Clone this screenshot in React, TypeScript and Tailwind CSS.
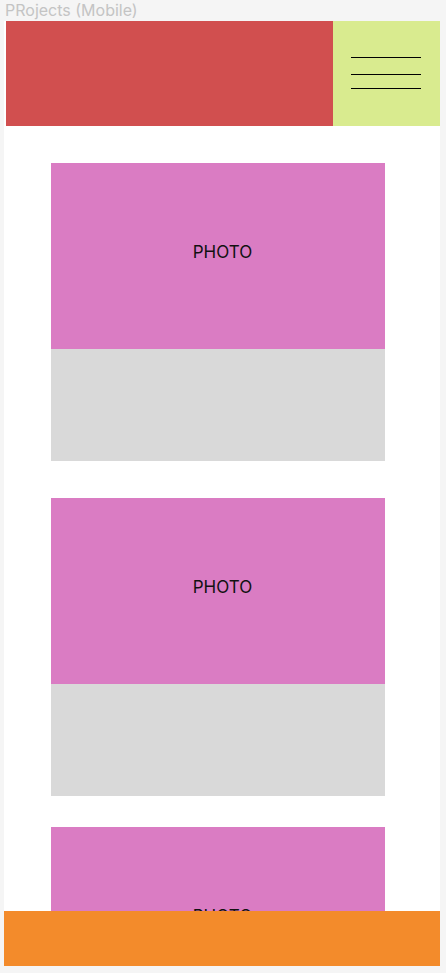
const cards = [
  { id: "p1", gap: "mt-[37px]" },
  { id: "p2", gap: "mt-[37px]" },
  { id: "p3", gap: "mt-[31px]" },
];

export default function App() {
  return (
    <div className="w-[446px] h-[973px] bg-[#f5f5f5] overflow-hidden font-['Inter',sans-serif]">
      <div className="h-[21px] pl-[5px] text-[16px] leading-[20px] text-[#c4c4c4]">
        PRojects (Mobile)
      </div>
      <div className="relative ml-[4px] w-[436px] h-[945px] bg-white overflow-hidden">
        <header className="flex h-[105px]">
          <div className="ml-[2px] w-[327px] bg-[#d14f4f]" />
          <div className="flex-1 bg-[#d9eb8f] flex flex-col pt-[36px] pl-[18px]">
            <span className="block w-[70px] h-px bg-black" />
            <span className="block w-[70px] h-px bg-black mt-[16px]" />
            <span className="block w-[70px] h-px bg-black mt-[13px]" />
          </div>
        </header>

        <main className="flex flex-col items-start pl-[47px]">
          {cards.map((c) => (
            <article key={c.id} className={`${c.gap} w-[334px]`}>
              <div className="h-[186px] bg-[#da7cc3] flex items-center justify-center pb-[6px] pl-[9px] text-[17px] text-[#111]">
                PHOTO
              </div>
              <div className="h-[112px] bg-[#d9d9d9]" />
            </article>
          ))}
        </main>

        <footer className="absolute left-0 bottom-0 w-full h-[55px] bg-[#f38b2b]" />
      </div>
    </div>
  );
}
